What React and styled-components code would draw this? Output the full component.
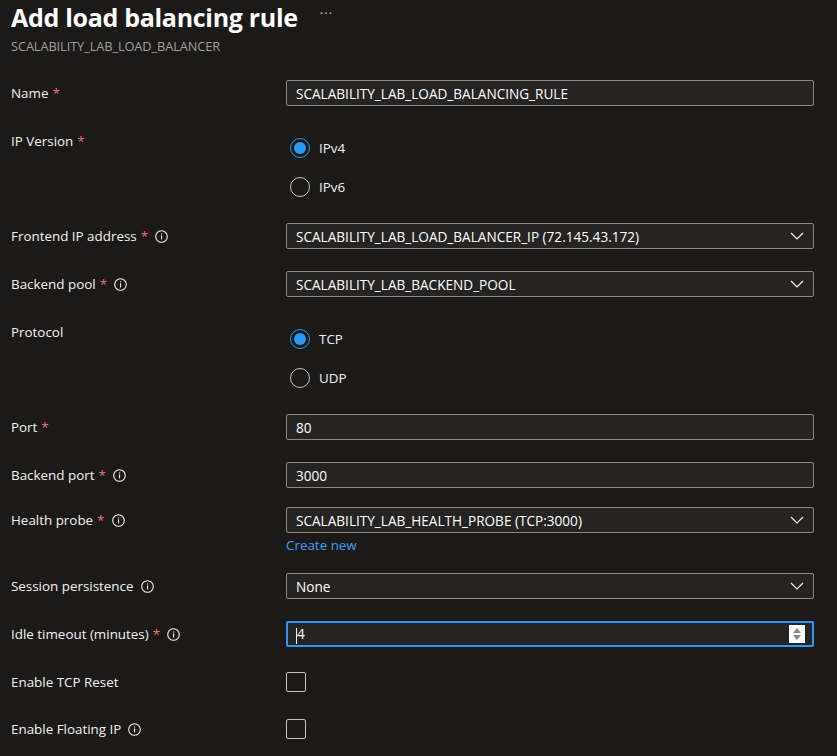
import React from "react";
import styled, { createGlobalStyle } from "styled-components";

const Global = createGlobalStyle`
  html, body { margin: 0; padding: 0; background: #1b1a19; }
  body { font-family: "Open Sans", "Noto Sans", sans-serif; color: #f3f2f1; }
`;

const Page = styled.div`
  width: 837px;
  height: 756px;
  overflow: hidden;
  background: #1b1a19;
  padding: 0 0 0 11px;
  box-sizing: border-box;
`;

const Header = styled.div`
  display: flex;
  flex-direction: column;
  padding-top: 1px;
`;

const TitleRow = styled.div`
  display: flex;
  align-items: center;
  height: 32px;
`;

const Title = styled.h1`
  margin: 0;
  font-size: 25px;
  font-weight: 700;
  color: #ffffff;
  letter-spacing: -0.3px;
`;

const More = styled.span`
  margin-left: 22px;
  font-size: 13px;
  color: #c8c6c4;
  letter-spacing: 1px;
  position: relative;
  top: -4px;
`;

const Subtitle = styled.div`
  font-size: 12.8px;
  color: #a19f9d;
  margin-top: 4px;
  letter-spacing: -0.1px;
`;

const Form = styled.div`
  display: flex;
  flex-direction: column;
  margin-top: 25px;
`;

const Row = styled.div`
  display: grid;
  grid-template-columns: 275px 528px;
  align-items: start;
  margin-bottom: ${(p) => p.$gap ?? 22}px;
`;

const Label = styled.div`
  display: flex;
  align-items: center;
  height: 26px;
  font-size: 13.4px;
  color: #f3f2f1;
  white-space: nowrap;
`;

const Star = styled.span`
  color: #f1707b;
  margin-left: 4px;
`;

const Info = styled.span`
  display: inline-flex;
  margin-left: 7px;
`;

const InfoIcon = () => (
  <Info>
    <svg width="13" height="13" viewBox="0 0 13 13" fill="none">
      <circle cx="6.5" cy="6.5" r="5.8" stroke="#f3f2f1" strokeWidth="1.1" />
      <rect x="6" y="5.4" width="1.1" height="4" fill="#f3f2f1" />
      <rect x="6" y="3.4" width="1.1" height="1.1" fill="#f3f2f1" />
    </svg>
  </Info>
);

const Field = styled.div`
  display: flex;
  flex-direction: column;
`;

const Box = styled.div`
  position: relative;
  display: flex;
  align-items: center;
  height: 26px;
  box-sizing: border-box;
  padding: 0 9px;
  background: #252423;
  border: ${(p) => (p.$focused ? "2px solid #2899f5" : "1px solid #8a8886")};
  border-radius: 2px;
  font-size: 13.6px;
  color: #ffffff;
  ${(p) => p.$focused && "padding: 0 7px 0 8px;"}
`;

const BoxText = styled.span`
  flex: 1;
  white-space: nowrap;
`;

const Chevron = () => (
  <svg width="14" height="8" viewBox="0 0 14 8" fill="none">
    <path d="M1 1 L7 7 L13 1" stroke="#f3f2f1" strokeWidth="1.2" />
  </svg>
);

const Caret = styled.span`
  display: inline-block;
  width: 1px;
  height: 16px;
  background: #f3f2f1;
  vertical-align: middle;
`;

const Spinner = styled.div`
  width: 16px;
  height: 18px;
  background: #ffffff;
  display: flex;
  flex-direction: column;
  align-items: center;
  justify-content: center;
  gap: 2px;
`;

const Tri = styled.div`
  width: 0;
  height: 0;
  border-left: 4px solid transparent;
  border-right: 4px solid transparent;
  ${(p) =>
    p.$up
      ? "border-bottom: 5px solid #8a8886;"
      : "border-top: 5px solid #8a8886;"}
`;

const Link = styled.a`
  font-size: 13.4px;
  color: #479ef5;
  margin-top: 3px;
  line-height: 18px;
  text-decoration: none;
`;

const RadioGroup = styled.div`
  display: flex;
  flex-direction: column;
  gap: 19px;
  padding: 10px 0 4px 4px;
`;

const RadioItem = styled.label`
  display: flex;
  align-items: center;
  height: 20px;
  font-size: 13.4px;
  color: #f3f2f1;
`;

const RadioCircle = styled.span`
  width: 20px;
  height: 20px;
  box-sizing: border-box;
  border-radius: 50%;
  border: 1px solid ${(p) => (p.$checked ? "#2899f5" : "#c8c6c4")};
  display: flex;
  align-items: center;
  justify-content: center;
  margin-right: 9px;
  &::after {
    content: "";
    width: 12px;
    height: 12px;
    border-radius: 50%;
    background: ${(p) => (p.$checked ? "#2899f5" : "transparent")};
  }
`;

const Check = styled.div`
  width: 20px;
  height: 20px;
  box-sizing: border-box;
  border: 1px solid #c8c6c4;
  border-radius: 2px;
  margin-top: 3px;
`;

const LabelText = ({ children, required, info }) => (
  <Label>
    {children}
    {required && <Star>*</Star>}
    {info && <InfoIcon />}
  </Label>
);

const Radio = ({ checked, children }) => (
  <RadioItem>
    <RadioCircle $checked={checked} />
    {children}
  </RadioItem>
);

const Select = ({ children }) => (
  <Box>
    <BoxText>{children}</BoxText>
    <Chevron />
  </Box>
);

export default function App() {
  return (
    <Page>
      <Global />
      <Header>
        <TitleRow>
          <Title>Add load balancing rule</Title>
          <More>···</More>
        </TitleRow>
        <Subtitle>SCALABILITY_LAB_LOAD_BALANCER</Subtitle>
      </Header>
      <Form>
        <Row>
          <LabelText required>Name</LabelText>
          <Box>
            <BoxText>SCALABILITY_LAB_LOAD_BALANCING_RULE</BoxText>
          </Box>
        </Row>
        <Row>
          <LabelText required>IP Version</LabelText>
          <RadioGroup>
            <Radio checked>IPv4</Radio>
            <Radio>IPv6</Radio>
          </RadioGroup>
        </Row>
        <Row>
          <LabelText required info>Frontend IP address</LabelText>
          <Select>SCALABILITY_LAB_LOAD_BALANCER_IP (72.145.43.172)</Select>
        </Row>
        <Row>
          <LabelText required info>Backend pool</LabelText>
          <Select>SCALABILITY_LAB_BACKEND_POOL</Select>
        </Row>
        <Row>
          <LabelText>Protocol</LabelText>
          <RadioGroup>
            <Radio checked>TCP</Radio>
            <Radio>UDP</Radio>
          </RadioGroup>
        </Row>
        <Row>
          <LabelText required>Port</LabelText>
          <Box>
            <BoxText>80</BoxText>
          </Box>
        </Row>
        <Row $gap={19}>
          <LabelText required info>Backend port</LabelText>
          <Box>
            <BoxText>3000</BoxText>
          </Box>
        </Row>
        <Row $gap={19}>
          <LabelText required info>Health probe</LabelText>
          <Field>
            <Select>SCALABILITY_LAB_HEALTH_PROBE (TCP:3000)</Select>
            <Link href="#">Create new</Link>
          </Field>
        </Row>
        <Row>
          <LabelText info>Session persistence</LabelText>
          <Select>None</Select>
        </Row>
        <Row>
          <LabelText required info>Idle timeout (minutes)</LabelText>
          <Box $focused>
            <BoxText>
              <Caret />4
            </BoxText>
            <Spinner>
              <Tri $up />
              <Tri />
            </Spinner>
          </Box>
        </Row>
        <Row $gap={21}>
          <LabelText>Enable TCP Reset</LabelText>
          <Check />
        </Row>
        <Row>
          <LabelText info>Enable Floating IP</LabelText>
          <Check />
        </Row>
      </Form>
    </Page>
  );
}
